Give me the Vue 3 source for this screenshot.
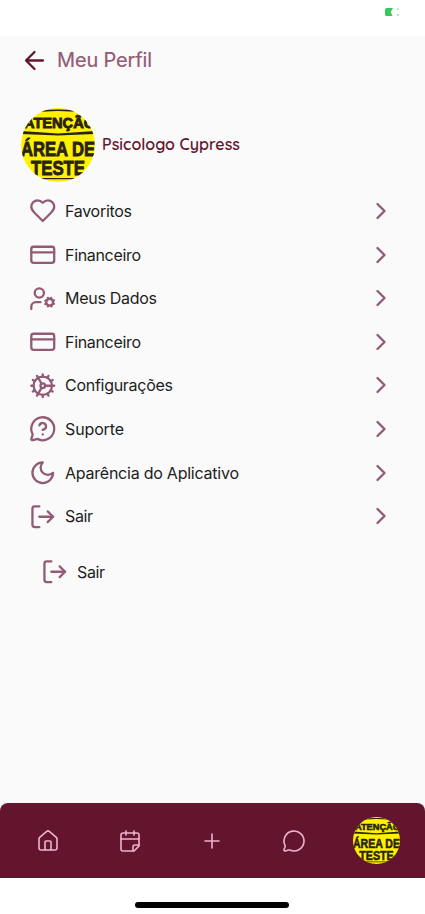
<script setup>
const bubble = 'M2.992 16.342a2 2 0 0 1 .094 1.167l-1.065 3.29a1 1 0 0 0 1.236 1.168l3.413-.998a2 2 0 0 1 1.099.092 10 10 0 1 0-4.777-4.719'
const icons = {
  heart: ['M19 14c1.49-1.46 3-3.21 3-5.5A5.5 5.5 0 0 0 16.5 3c-1.76 0-3 .5-4.5 2-1.5-1.5-2.74-2-4.5-2A5.5 5.5 0 0 0 2 8.5c0 2.3 1.5 4.05 3 5.5l7 7Z'],
  card: ['M4 5h16a2 2 0 0 1 2 2v10a2 2 0 0 1-2 2H4a2 2 0 0 1-2-2V7a2 2 0 0 1 2-2Z', 'M2 10h20'],
  user: ['M9 11a4 4 0 1 0 0-8 4 4 0 0 0 0 8Z', 'M10 15H6a4 4 0 0 0-4 4v2', 'M18 18a3 3 0 1 0 0-6 3 3 0 0 0 0 6Z', 'm21.7 16.4-.9-.3', 'm15.2 13.9-.9-.3', 'm16.6 18.7.3-.9', 'm19.1 12.2.3-.9', 'm19.6 18.7-.4-1', 'm16.8 12.3-.4-1', 'm14.3 16.6 1-.4', 'm20.7 13.8 1-.4'],
  cog: ['M12 20a8 8 0 1 0 0-16 8 8 0 0 0 0 16Z', 'M12 14a2 2 0 1 0 0-4 2 2 0 0 0 0 4Z', 'M12 2v2', 'M12 22v-2', 'm17 20.66-1-1.73', 'M11 10.27 7 3.34', 'm20.66 17-1.73-1', 'm3.34 7 1.73 1', 'M14 12h8', 'M2 12h2', 'm20.66 7-1.73 1', 'm3.34 17 1.73-1', 'm17 3.34-1 1.73', 'm11 13.73-4 6.93'],
  help: [bubble, 'M9.09 9a3 3 0 0 1 5.83 1c0 2-3 3-3 3', 'M12 17h.01'],
  moon: ['M12 3a6 6 0 0 0 9 9 9 9 0 1 1-9-9Z'],
  exit: ['M9 21H5a2 2 0 0 1-2-2V5a2 2 0 0 1 2-2h4', 'm16.3 16.7 4.7-4.7-4.7-4.7', 'M21 12H9'],
}
const items = [
  ['heart', 'Favoritos', 67], ['card', 'Financeiro', 76], ['user', 'Meus Dados', 92],
  ['card', 'Financeiro', 76], ['cog', 'Configurações', 108], ['help', 'Suporte', 59],
  ['moon', 'Aparência do Aplicativo', 174], ['exit', 'Sair', 28],
]
const nav = [
  ['home', ['M15 21v-8a1 1 0 0 0-1-1h-4a1 1 0 0 0-1 1v8', 'M3 10a2 2 0 0 1 .709-1.528l7-6a2 2 0 0 1 2.582 0l7 6A2 2 0 0 1 21 10v9a2 2 0 0 1-2 2H5a2 2 0 0 1-2-2z']],
  ['calendar', ['M8 2v4', 'M16 2v4', 'M21 17V6a2 2 0 0 0-2-2H5a2 2 0 0 0-2 2v14a2 2 0 0 0 2 2h11Z', 'M3 10h18', 'M15 22v-4a2 2 0 0 1 2-2h4']],
  ['plus', ['M5 12h14', 'M12 5v14']],
  ['chat', [bubble]],
]
</script>

<template>
  <div class="screen">
    <div class="status">
      <svg class="battery" viewBox="0 0 16 10"><path d="M2 .7h6.5L6 5l2 4.3H2Q0 9.3 0 7.3V2.7Q0 .7 2 .7Z" fill="#34c759" /><path d="M13 1.2h1.5v1.5H13zM13 7.5h1.5V9H13z" fill="#6bd486" /></svg>
    </div>
    <header class="header">
      <svg class="back" viewBox="0 0 24 24"><path d="m12 19-7-7 7-7M19 12H5" /></svg>
      <svg class="title" width="96" height="30"><text x="0" y="22" textLength="95">Meu Perfil</text></svg>
    </header>
    <section class="profile">
      <svg class="avatar" viewBox="0 0 74 74"><use href="#sign" /></svg>
      <svg class="name" width="140" height="24"><text x="0" y="17" textLength="138">Psicologo Cypress</text></svg>
    </section>
    <main class="menu">
      <div v-for="([icon, label, w], i) in items" :key="i" class="row">
        <svg class="icon" viewBox="0 0 24 24"><path v-for="d in icons[icon]" :key="d" :d="d" /></svg>
        <svg class="label" height="24"><text x="0" y="18" :textLength="w">{{ label }}</text></svg>
        <svg class="chevron" viewBox="0 0 24 24"><path d="m9 18 6-6-6-6" /></svg>
      </div>
      <div class="row extra">
        <svg class="icon" viewBox="0 0 24 24"><path v-for="d in icons.exit" :key="d" :d="d" /></svg>
        <svg class="label" height="24"><text x="0" y="18" textLength="28">Sair</text></svg>
      </div>
    </main>
    <nav class="nav">
      <div v-for="[name, paths] in nav" :key="name" class="tab">
        <svg class="nav-icon" viewBox="0 0 24 24"><path v-for="d in paths" :key="d" :d="d" /></svg>
      </div>
      <div class="tab"><svg class="nav-avatar" viewBox="0 0 74 74"><use href="#sign" /></svg></div>
    </nav>
    <footer class="bottom"><div class="indicator"></div></footer>
    <svg class="defs" width="0" height="0">
      <defs>
        <clipPath id="round"><circle cx="37" cy="37" r="37" /></clipPath>
        <g id="sign" clip-path="url(#round)">
          <rect width="74" height="74" fill="#fff200" />
          <path d="M0 5.5Q37 .5 74 5.5V3Q37 0 0 3zM0 23 37 25.5 74 23v3L37 27.5 0 26zM0 70h74v1.3H0z" fill="#282315" />
          <g class="sign-text">
            <text x="3" y="20" font-size="14.5" textLength="71" lengthAdjust="spacingAndGlyphs">ATENÇÃO</text>
            <text x="0" y="48.3" font-size="20" textLength="74" lengthAdjust="spacingAndGlyphs">ÁREA DE</text>
            <text x="10" y="67" font-size="20" textLength="54" lengthAdjust="spacingAndGlyphs">TESTE</text>
          </g>
        </g>
      </defs>
    </svg>
  </div>
</template>

<style>
body { margin: 0; }
</style>
<style scoped>
.screen { width: 425px; height: 914px; display: flex; flex-direction: column; background: #fafafa; font-family: Inter, "Liberation Sans", sans-serif; overflow: hidden; position: relative; }
svg { display: block; flex: none; overflow: visible; }
.status { height: 36px; background: #fff; display: flex; justify-content: flex-end; padding: 7px 25px 0 0; box-sizing: border-box; }
.battery { width: 15px; height: 10px; }
.header { height: 48px; display: flex; align-items: center; padding-left: 20px; }
.back { width: 29px; height: 29px; fill: none; stroke: #64152e; stroke-width: 1.9; stroke-linecap: round; stroke-linejoin: round; }
.title { margin-left: 8px; font-size: 20px; fill: #925b75; stroke: #925b75; stroke-width: .2; }
.profile { margin-top: 23.5px; height: 74px; display: flex; align-items: center; padding-left: 21px; }
.avatar { width: 74px; height: 74px; }
.name { margin-left: 7.4px; font-family: Quicksand, Lato, sans-serif; font-weight: 600; font-size: 16px; fill: #64152e; }
.menu { flex: 1; padding: 7.8px 29px 0; }
.row { height: 43.6px; display: flex; align-items: center; }
.icon { width: 27.5px; height: 27.5px; }
.icon, .chevron { fill: none; stroke: #925b75; stroke-width: 2; stroke-linecap: round; stroke-linejoin: round; }
.label { width: 175px; margin-left: 8.2px; font-size: 16px; fill: #211d20; }
.chevron { width: 28px; height: 28px; margin-left: auto; margin-right: 1px; }
.extra { margin: 12px 0 0 12px; }
.nav { height: 75px; box-sizing: border-box; background: #64152e; border-radius: 8px 8px 0 0; display: grid; grid-template-columns: repeat(5, 1fr); padding: 0 7.5px 0 6.5px; }
.tab { display: flex; align-items: center; justify-content: center; }
.nav-icon { width: 24px; height: 24px; fill: none; stroke: #edb3cd; stroke-width: 1.6; stroke-linecap: round; stroke-linejoin: round; }
.nav-avatar { width: 47px; height: 47px; }
.bottom { height: 36px; background: #fff; display: flex; justify-content: center; align-items: flex-start; padding: 24px 1px 0 0; box-sizing: border-box; }
.indicator { width: 154px; height: 6px; border-radius: 3px; background: #000; }
.defs { position: absolute; }
.sign-text { font-family: "Liberation Sans", sans-serif; font-weight: bold; fill: #282315; stroke: #282315; stroke-width: .9; }
</style>
